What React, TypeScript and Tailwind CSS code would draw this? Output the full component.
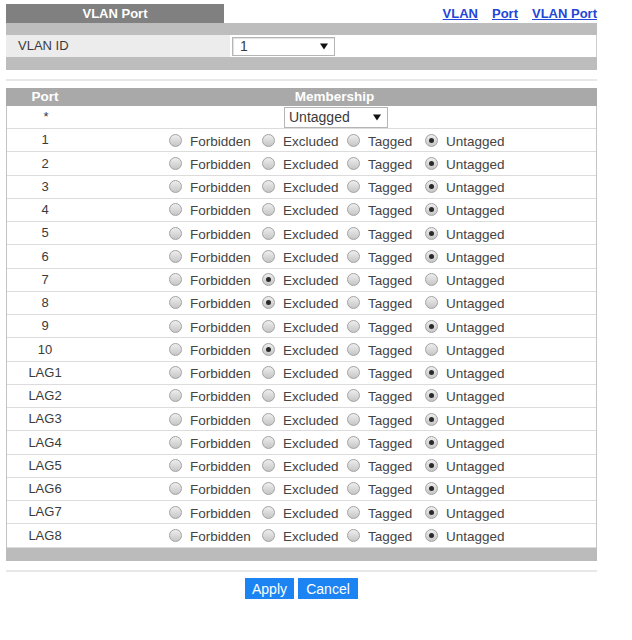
import React from "react";

type Choice = "Forbidden" | "Excluded" | "Tagged" | "Untagged";

const rows: [string, Choice][] = [
    ["1", "Untagged"], ["2", "Untagged"], ["3", "Untagged"], ["4", "Untagged"], ["5", "Untagged"],
    ["6", "Untagged"], ["7", "Excluded"], ["8", "Excluded"], ["9", "Untagged"], ["10", "Excluded"],
    ["LAG1", "Untagged"], ["LAG2", "Untagged"], ["LAG3", "Untagged"], ["LAG4", "Untagged"],
    ["LAG5", "Untagged"], ["LAG6", "Untagged"], ["LAG7", "Untagged"], ["LAG8", "Untagged"],
];

const options: {name: Choice; w: string}[] = [
    {name: "Forbidden", w: "w-[93px]"},
    {name: "Excluded", w: "w-[85px]"},
    {name: "Tagged", w: "w-[78px]"},
    {name: "Untagged", w: "w-[90px]"},
];

function Radio({on}: {on: boolean}) {
    return (
        <span className="w-[13px] h-[13px] shrink-0 rounded-full border border-[#a2a2a2] bg-linear-to-b from-[#eeeeee] to-[#c6c6c6] flex items-center justify-center">
            {on && <span className="w-[5px] h-[5px] rounded-full bg-[#2a2a2a]"/>}
        </span>
    );
}

function Arrow() {
    return (
        <svg width="8" height="7" viewBox="0 0 8 7" className="shrink-0">
            <path d="M0 0.5 L8 0.5 L4 6.5 Z" fill="#111"/>
        </svg>
    );
}

export default function App() {
    return (
        <div className="w-[632px] h-[640px] bg-white font-['Liberation_Sans',Arial,sans-serif] text-[13px] text-[#3a3a3a]">
            <div className="ml-[6px] w-[591px] pt-[4px]">
                {/* title tab + links */}
                <div className="flex h-[19px]">
                    <div className="w-[218px] bg-[#808080] text-white font-bold flex items-center justify-center">
                        VLAN Port
                    </div>
                    <div className="flex-1 flex justify-end items-start gap-[14px] text-[#2347d6] font-bold underline leading-[15px] pt-[2px]">
                        <span>VLAN</span>
                        <span>Port</span>
                        <span>VLAN Port</span>
                    </div>
                </div>

                {/* VLAN ID box */}
                <div className="h-[12px] bg-[#bdbdbd]"/>
                <div className="flex h-[22px] border-r border-[#cfcfcf]">
                    <div className="w-[224px] bg-[#ececec] pl-[12px] flex items-center">VLAN ID</div>
                    <div className="flex-1 bg-white flex items-center pl-[2px]">
                        <div className="w-[103px] h-[19px] border border-[#b5b5b5] shadow-[inset_1px_1px_1px_#e0e0e0] flex items-center justify-between pl-[7px] pr-[6px] text-[14px]">
                            <span>1</span>
                            <Arrow/>
                        </div>
                    </div>
                </div>
                <div className="h-[13px] bg-[#bdbdbd]"/>

                <div className="mt-[9px] h-[2px] bg-[#e8e8e8]"/>

                {/* membership table */}
                <div className="mt-[7px]">
                    <div className="flex h-[18px] bg-[#a9a9a9] text-white font-bold text-[13.5px]">
                        <div className="w-[78px] flex items-center justify-center">Port</div>
                        <div className="flex-1 flex items-center justify-center pr-[12px]">Membership</div>
                    </div>
                    <div className="border-x border-[#c4c4c4]">
                        <div className="flex h-[23px] border-b border-[#dcdcdc]">
                            <div className="w-[78px] flex items-center justify-center">*</div>
                            <div className="flex-1 flex items-center pl-[199px]">
                                <div className="w-[104px] h-[21px] border border-[#b5b5b5] flex items-center justify-between pl-[4px] pr-[6px] text-[14px]">
                                    <span>Untagged</span>
                                    <Arrow/>
                                </div>
                            </div>
                        </div>
                        {rows.map(([port, sel]) => (
                            <div key={port} className="flex h-[23.25px] border-b border-[#dcdcdc]">
                                <div className="w-[76px] flex items-center justify-center">{port}</div>
                                <div className="flex-1 flex items-center pl-[86px]">
                                    {options.map(o => (
                                        <div key={o.name} className={`${o.w} flex items-center`}>
                                            <Radio on={o.name === sel}/>
                                            <span className="ml-[8px] mt-[3px] text-[#444] text-[13.5px]">{o.name}</span>
                                        </div>
                                    ))}
                                </div>
                            </div>
                        ))}
                    </div>
                    <div className="h-[13px] bg-[#bbbbbb]"/>
                </div>

                <div className="mt-[9px] h-[2px] bg-[#e8e8e8]"/>

                <div className="mt-[6px] flex justify-center gap-[4px]">
                    <button className="w-[49px] h-[21px] bg-[#1b84f2] text-white text-[14px] leading-none pt-[1px]">Apply</button>
                    <button className="w-[60px] h-[21px] bg-[#1b84f2] text-white text-[14px] leading-none pt-[1px]">Cancel</button>
                </div>
            </div>
        </div>
    );
}
